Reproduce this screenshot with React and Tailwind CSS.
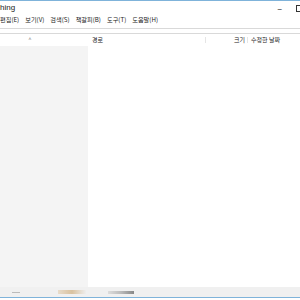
export default function App() {
  const menus = ["편집(E)", "보기(V)", "검색(S)", "책갈피(B)", "도구(T)", "도움말(H)"];
  return (
    <div
      className="flex h-[300px] w-[300px] flex-col overflow-hidden bg-white text-[7px] text-[#222]"
      style={{ fontFamily: '"Noto Sans CJK KR", "Liberation Sans", sans-serif' }}
    >
      <div className="h-px bg-[#7fb3da]" />
      <div className="flex h-[14px] items-center justify-between">
        <span className="text-[8px] leading-none" style={{ fontFamily: '"Liberation Sans", sans-serif' }}>
          hing
        </span>
        <div className="flex items-center gap-[14px]">
          <span className="text-[9px] leading-none">–</span>
          <span className="-mr-[3px] inline-block h-[7px] w-[7px] border border-[#333]" />
        </div>
      </div>
      <div className="flex h-[11px] items-center gap-[6px] text-[6.2px] leading-none">
        {menus.map((m) => (
          <span key={m}>{m}</span>
        ))}
      </div>
      <div className="mt-[2px] h-[6px] border-y border-[#d9d9d9]" />
      <div className="flex flex-1">
        <div className="flex w-[88px] flex-col bg-[#f4f4f4]">
          <div className="flex h-[12px] items-start justify-center bg-white pr-[28px] pt-[1px] text-[6px] text-[#888]">^</div>
        </div>
        <div className="flex flex-1 flex-col">
          <div className="flex h-[12px] items-center text-[6px] leading-none">
            <span className="w-[118px] border-r border-[#e5e5e5] pl-[4px]">경로</span>
            <span className="w-[42px] border-r border-[#e5e5e5] pr-[2px] text-right">크기</span>
            <span className="pl-[3px]">수정한 날짜</span>
          </div>
        </div>
      </div>
      <div className="flex h-[10px] items-center gap-[10px] bg-[#f0f0f0] pl-[12px]">
        <span className="h-px w-[8px] bg-[#bbb]" />
        <span className="ml-[28px] h-[4px] w-[28px] bg-gradient-to-r from-[#e8dccb] via-[#d9c2a0] to-[#eee]" />
        <span className="ml-[12px] h-[3px] w-[26px] bg-gradient-to-r from-[#ddd] via-[#bbb] to-[#888]" />
      </div>
      <div className="h-px bg-[#7fb3da]" />
      <div className="h-[2px] bg-white" />
    </div>
  );
}
